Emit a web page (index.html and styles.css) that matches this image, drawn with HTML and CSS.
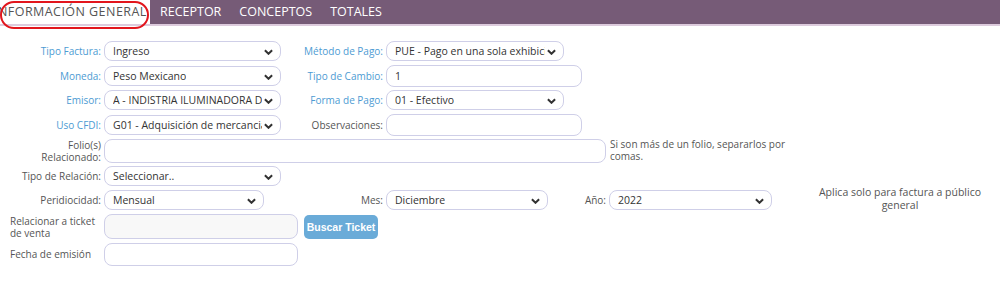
FILE: index.html
```html
<!DOCTYPE html>
<html lang="es">
<head>
<meta charset="utf-8">
<link rel="stylesheet" href="styles.css">
</head>
<body>
<nav class="tabs">
  <span class="tab active">INFORMACIÓN GENERAL</span>
  <span class="tab">RECEPTOR</span>
  <span class="tab">CONCEPTOS</span>
  <span class="tab">TOTALES</span>
  <span class="mark"></span>
</nav>
<form class="form">
  <div class="row">
    <label class="lbl blue">Tipo Factura:</label>
    <span class="sel w177"><span class="val">Ingreso</span><svg class="chev" viewBox="0 0 10 6"><path d="M1 1l4 4 4-4"/></svg></span>
    <label class="lbl lbl2 blue">Método de Pago:</label>
    <span class="sel w178"><span class="val">PUE - Pago en una sola exhibici</span><svg class="chev" viewBox="0 0 10 6"><path d="M1 1l4 4 4-4"/></svg></span>
  </div>
  <div class="row">
    <label class="lbl blue">Moneda:</label>
    <span class="sel w177"><span class="val">Peso Mexicano</span><svg class="chev" viewBox="0 0 10 6"><path d="M1 1l4 4 4-4"/></svg></span>
    <label class="lbl lbl2 blue">Tipo de Cambio:</label>
    <span class="inp w196 h22"><span class="val">1</span></span>
  </div>
  <div class="row">
    <label class="lbl blue">Emisor:</label>
    <span class="sel w177"><span class="val">A - INDISTRIA ILUMINADORA D</span><svg class="chev" viewBox="0 0 10 6"><path d="M1 1l4 4 4-4"/></svg></span>
    <label class="lbl lbl2 blue">Forma de Pago:</label>
    <span class="sel w178"><span class="val">01 - Efectivo</span><svg class="chev" viewBox="0 0 10 6"><path d="M1 1l4 4 4-4"/></svg></span>
  </div>
  <div class="row">
    <label class="lbl blue">Uso CFDI:</label>
    <span class="sel w177"><span class="val">G01 - Adquisición de mercancia</span><svg class="chev" viewBox="0 0 10 6"><path d="M1 1l4 4 4-4"/></svg></span>
    <label class="lbl lbl2">Observaciones:</label>
    <span class="inp w196 h22"></span>
  </div>
  <div class="row">
    <label class="lbl two">Folio(s)<br>Relacionado:</label>
    <span class="inp w502 h24"></span>
    <span class="help">Si son más de un folio, separarlos por comas.</span>
  </div>
  <div class="row">
    <label class="lbl">Tipo de Relación:</label>
    <span class="sel w177"><span class="val">Seleccionar..</span><svg class="chev" viewBox="0 0 10 6"><path d="M1 1l4 4 4-4"/></svg></span>
  </div>
  <div class="row">
    <label class="lbl">Peridiocidad:</label>
    <span class="sel w160"><span class="val">Mensual</span><svg class="chev" viewBox="0 0 10 6"><path d="M1 1l4 4 4-4"/></svg></span>
    <label class="lbl lbl3">Mes:</label>
    <span class="sel w162"><span class="val">Diciembre</span><svg class="chev" viewBox="0 0 10 6"><path d="M1 1l4 4 4-4"/></svg></span>
    <label class="lbl lbl4">Año:</label>
    <span class="sel w163"><span class="val">2022</span><svg class="chev" viewBox="0 0 10 6"><path d="M1 1l4 4 4-4"/></svg></span>
    <span class="note">Aplica solo para factura a público general</span>
  </div>
  <div class="row">
    <label class="lbl left two">Relacionar a ticket de venta</label>
    <span class="inp w194 h25 grey"></span>
    <button type="button" class="btn">Buscar Ticket</button>
  </div>
  <div class="row">
    <label class="lbl left">Fecha de emisión</label>
    <span class="inp w194 h23"></span>
  </div>
</form>
</body>
</html>
```

FILE: styles.css
```css
html, body {
  margin: 0;
  padding: 0;
  background: #fff;
}
body {
  width: 1000px;
  height: 304px;
  overflow: hidden;
  font-family: "Open Sans", "Liberation Sans", sans-serif;
  font-size: 10px;
  color: #444;
}
.tabs {
  position: relative;
  display: flex;
  align-items: center;
  height: 24px;
  background: #765b77;
  border-bottom: 2px solid #ddcbdd;
}
.tab {
  color: #fff;
  font-size: 12.5px;
  padding: 0 9px;
  line-height: 24px;
  white-space: nowrap;
}
.tab:nth-child(2) { padding-left: 10px; }
.tab.active {
  background: #fff;
  color: #555;
  width: 150px;
  box-sizing: border-box;
  padding: 0;
  letter-spacing: 0.45px;
  text-indent: -6px;
  overflow: hidden;
}
.mark {
  position: absolute;
  left: 0;
  top: 1px;
  width: 149px;
  height: 28px;
  box-sizing: border-box;
  border: 2.5px solid #e2161d;
  border-radius: 14px;
}
.form {
  padding-top: 13px;
  display: grid;
  grid-template-rows: 24px 25px 24px 26px 26px 24px 24px 29px 26px;
}
.row {
  display: flex;
  align-items: center;
}
.lbl {
  width: 104px;
  flex: none;
  text-align: right;
  padding-right: 3px;
  box-sizing: border-box;
  color: #555;
  line-height: 12px;
}
.lbl.blue { color: #4d9bd3; }
.lbl2 { width: 105px; }
.lbl3 { width: 122px; }
.lbl4 { width: 61px; }
.lbl.left {
  text-align: left;
  padding-left: 10px;
  padding-right: 4px;
}
.sel, .inp {
  position: relative;
  flex: none;
  box-sizing: border-box;
  height: 20px;
  border: 1px solid #cfcfe8;
  border-radius: 8px;
  background: #fff;
  display: flex;
  align-items: center;
  padding-left: 8px;
  color: #333;
  font-size: 10.5px;
  overflow: hidden;
  white-space: nowrap;
}
.val {
  overflow: hidden;
  max-width: calc(100% - 18px);
}
.chev {
  position: absolute;
  right: 7px;
  top: 7px;
  width: 9px;
  height: 6px;
  fill: none;
  stroke: #333;
  stroke-width: 2.2;
}
.w177 { width: 177px; }
.w178 { width: 178px; }
.w196 { width: 196px; }
.w502 { width: 502px; }
.w160 { width: 160px; }
.w162 { width: 162px; }
.w163 { width: 163px; }
.w194 { width: 194px; }
.h22 { height: 22px; }
.h23 { height: 23px; }
.h24 { height: 24px; }
.h25 { height: 25px; }
.grey { background: #f8f8f8; }
.help {
  width: 190px;
  margin-left: 4px;
  line-height: 12px;
  color: #555;
  align-self: flex-start;
}
.note {
  width: 170px;
  margin-left: 43px;
  text-align: center;
  font-size: 10.5px;
  line-height: 13px;
  color: #555;
  align-self: flex-start;
  margin-top: -2px;
}
.btn {
  margin-left: 6px;
  height: 24px;
  width: 74px;
  padding: 0;
  border: none;
  border-radius: 5px;
  background: #6aabd8;
  color: #fff;
  font-family: "Liberation Sans", Arial, sans-serif;
  font-weight: bold;
  font-size: 10.5px;
  white-space: nowrap;
}
```
